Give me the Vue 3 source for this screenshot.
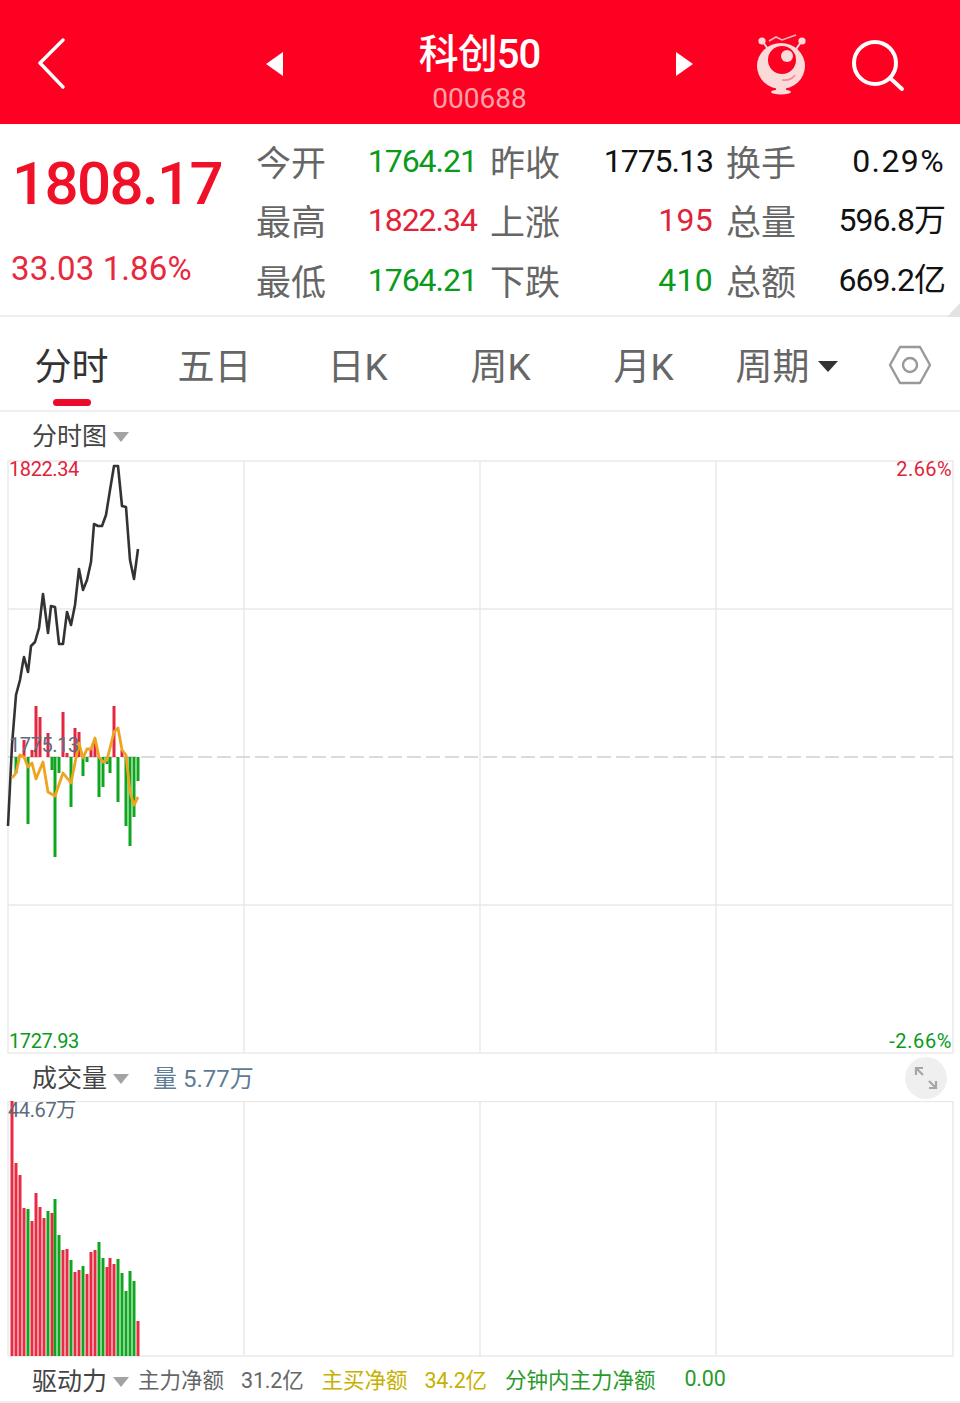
<script setup>
const tabs = ["分时", "五日", "日K", "周K", "月K"];

const stats = [
  ["今开", "1764.21", "down", "昨收", "1775.13", "", "换手", "0.29%", "pct"],
  ["最高", "1822.34", "up", "上涨", "195", "up int", "总量", "596.8万", ""],
  ["最低", "1764.21", "down", "下跌", "410", "down int", "总额", "669.2亿", ""],
];

const price = [
  [8, 826], [12, 745], [16, 695], [20, 680], [23, 662], [24, 657], [28, 672], [31, 646], [35, 642], [39, 628], [43, 594],
  [48, 633], [51, 606], [55, 607], [59, 644], [63, 644], [67, 612], [71, 625], [75, 605], [79, 569], [83, 590],
  [87, 580], [91, 562], [94, 524], [98, 526], [102, 526], [106, 515], [110, 490], [114, 466], [118, 466], [122, 506],
  [126, 507], [130, 560], [134, 579], [138, 549],
];

const avg = [
  [12, 778], [16, 773], [20, 755], [24, 757], [28, 767], [32, 763], [36, 779], [43, 762], [48, 792], [55, 796],
  [63, 773], [71, 783], [75, 763], [79, 743], [83, 758], [87, 749], [91, 749], [95, 738], [99, 757], [103, 762],
  [107, 760], [114, 732], [118, 728], [122, 750], [126, 755], [130, 792], [134, 805], [138, 797],
];

// x, end y of each tick bar measured from the zero line
const ticks = [
  [16, 773], [20, 755], [24, 740], [28, 824], [32, 750], [36, 706], [40, 717], [48, 733], [52, 770], [55, 857],
  [59, 773], [63, 712], [67, 753], [71, 807], [75, 728], [79, 732], [83, 776], [87, 762], [91, 748], [95, 743],
  [99, 797], [103, 787], [107, 764], [110, 773], [114, 706], [118, 802], [122, 750], [126, 826], [130, 846],
  [134, 817], [138, 781],
];

const volumes = [
  [12, 1101, "r"], [16, 1163, "r"], [20, 1175, "r"], [24, 1208, "r"], [28, 1209, "g"], [32, 1221, "r"], [36, 1193, "r"],
  [40, 1207, "r"], [44, 1218, "r"], [48, 1211, "g"], [52, 1213, "r"], [55, 1199, "g"], [59, 1235, "g"], [63, 1250, "r"],
  [67, 1249, "r"], [71, 1260, "g"], [75, 1272, "r"], [79, 1270, "r"], [83, 1266, "g"], [87, 1274, "r"], [91, 1252, "r"],
  [95, 1250, "r"], [99, 1242, "g"], [103, 1258, "g"], [107, 1267, "r"], [110, 1258, "r"], [114, 1264, "r"], [118, 1259, "g"],
  [122, 1273, "g"], [126, 1291, "g"], [130, 1271, "g"], [134, 1281, "g"], [138, 1321, "r"],
];

const gridX = [244, 480, 716];
const toPoints = (list) => list.map((p) => p.join(",")).join(" ");
</script>

<template>
  <div class="page">
    <header class="topbar">
      <svg class="back" width="30" height="52" viewBox="0 0 30 52">
        <path d="M26 2 3 25l23 24" fill="none" stroke="#fff" stroke-width="3.4" stroke-linecap="round" stroke-linejoin="round" />
      </svg>
      <span class="arrow arrow-left"></span>
      <div class="title-wrap">
        <div class="title">科创50</div>
        <div class="code">000688</div>
      </div>
      <span class="arrow arrow-right"></span>
      <svg class="mascot" width="52" height="62" viewBox="757 33 52 62">
        <path d="M764 42l7 10M802 42l-7 10" stroke="#fbdada" stroke-width="2" />
        <circle cx="763" cy="41" r="3.6" fill="#fbdada" />
        <circle cx="803" cy="41" r="3.6" fill="#fbdada" />
        <path d="M770 41l7-4 6 3 14-5" fill="none" stroke="#fbb5b9" stroke-width="1.6" />
        <ellipse cx="782" cy="66" rx="24" ry="23" fill="#fbdada" />
        <circle cx="783" cy="60" r="14" fill="#fe0022" />
        <circle cx="788" cy="56" r="6" fill="#fbdada" />
        <path d="M783 80q9 1 13-5" fill="none" stroke="#f58a92" stroke-width="1.6" />
        <path d="M777 88h10v3h-10z" fill="#fbdada" />
        <ellipse cx="782" cy="92" rx="10" ry="2.6" fill="#fbdada" />
      </svg>
      <svg class="search" width="54" height="54" viewBox="0 0 54 54">
        <circle cx="24" cy="24" r="21" fill="none" stroke="#fff" stroke-width="4" />
        <path d="M39 39l12 11" stroke="#fff" stroke-width="4" stroke-linecap="round" />
      </svg>
    </header>

    <section class="quote">
      <div class="quote-main">
        <div class="last">1808.17</div>
        <div class="change">33.03 1.86%</div>
      </div>
      <div class="stats">
        <template v-for="row in stats" :key="row[0]">
          <span class="stat-label">{{ row[0] }}</span>
          <span class="stat-value" :class="row[2]">{{ row[1] }}</span>
          <span class="stat-label">{{ row[3] }}</span>
          <span class="stat-value" :class="row[5]">{{ row[4] }}</span>
          <span class="stat-label">{{ row[6] }}</span>
          <span class="stat-value" :class="row[8]">{{ row[7] }}</span>
        </template>
      </div>
      <span class="corner"></span>
    </section>

    <nav class="tabs">
      <div v-for="(tab, i) in tabs" :key="tab" class="tab" :class="{ active: i === 0 }">{{ tab }}</div>
      <div class="tab">周期<span class="tab-caret"></span></div>
      <svg class="hex" width="44" height="40" viewBox="0 0 44 40">
        <path d="M12 2h20l10 18-10 18H12L2 20z" fill="none" stroke="#999" stroke-width="2.4" stroke-linejoin="round" />
        <circle cx="22" cy="20" r="7" fill="none" stroke="#999" stroke-width="2.4" />
      </svg>
    </nav>

    <div class="chart-head">分时图<span class="caret"></span></div>

    <div class="chart price-chart">
      <svg width="960" height="594" viewBox="0 460 960 594">
        <rect x="8" y="461" width="945" height="592" fill="none" stroke="#e8e8e8" stroke-width="1.4" />
        <line v-for="x in gridX" :key="x" :x1="x" :x2="x" y1="461" y2="1053" stroke="#e8e8e8" stroke-width="1.4" />
        <line x1="8" x2="953" y1="609" y2="609" stroke="#e8e8e8" stroke-width="1.4" />
        <line x1="8" x2="953" y1="905" y2="905" stroke="#e8e8e8" stroke-width="1.4" />
        <line x1="8" x2="953" y1="757" y2="757" stroke="#cfcfcf" stroke-width="1.4" stroke-dasharray="14 5" />
        <rect
          v-for="t in ticks"
          :key="t[0]"
          :x="t[0] - 1.5"
          :y="Math.min(t[1], 757)"
          width="3"
          :height="Math.abs(t[1] - 757)"
          :fill="t[1] < 757 ? '#e5263f' : '#0ea51f'"
        />
        <polyline :points="toPoints(price)" fill="none" stroke="#333" stroke-width="2.6" stroke-linejoin="round" />
        <polyline :points="toPoints(avg)" fill="none" stroke="#f0a31e" stroke-width="2.8" stroke-linejoin="round" />
      </svg>
      <span class="axis top-left up">1822.34</span>
      <span class="axis top-right up">2.66%</span>
      <span class="axis mid-left">1775.13</span>
      <span class="axis bottom-left down">1727.93</span>
      <span class="axis bottom-right down">-2.66%</span>
    </div>

    <div class="chart-head volume-head">
      成交量<span class="caret"></span>
      <span class="volume-now">量 5.77万</span>
      <button class="expand">
        <svg width="26" height="26" viewBox="0 0 26 26">
          <path d="M3 10V3h7M3 3l7 7M23 16v7h-7M23 23l-7-7" fill="none" stroke="#a6a6a6" stroke-width="2.2" />
        </svg>
      </button>
    </div>

    <div class="chart volume-chart">
      <svg width="960" height="256" viewBox="0 1101 960 256">
        <rect x="8" y="1101.5" width="945" height="254.5" fill="none" stroke="#e8e8e8" stroke-width="1.4" />
        <line v-for="x in gridX" :key="x" :x1="x" :x2="x" y1="1101" y2="1356" stroke="#e8e8e8" stroke-width="1.4" />
        <rect
          v-for="v in volumes"
          :key="v[0]"
          :x="v[0] - 1.5"
          :y="v[1]"
          width="3"
          :height="1356 - v[1]"
          :fill="v[2] === 'r' ? '#e82a42' : '#0ea51f'"
        />
      </svg>
      <span class="axis vol-max">44.67万</span>
    </div>

    <footer class="drive">
      <span class="drive-name">驱动力<span class="caret"></span></span>
      <span class="drive-item gray first">主力净额</span>
      <span class="drive-item gray num">31.2亿</span>
      <span class="drive-item yellow">主买净额</span>
      <span class="drive-item yellow num">34.2亿</span>
      <span class="drive-item green">分钟内主力净额</span>
      <span class="drive-item green num last-num">0.00</span>
    </footer>
  </div>
</template>

<style scoped>
.page {
  width: 960px;
  height: 1403px;
  overflow: hidden;
  background: #fff;
  font-family: Roboto, "Noto Sans CJK SC", sans-serif;
  color: #333;
}

.topbar {
  height: 124px;
  background: #fe0022;
  position: relative;
  display: flex;
  align-items: center;
  color: #fff;
}

.back {
  margin-left: 37px;
  margin-top: 4px;
}

.arrow {
  width: 0;
  height: 0;
  border-top: 12px solid transparent;
  border-bottom: 12px solid transparent;
  margin-top: 3px;
}

.arrow-left {
  margin-left: 199px;
  border-right: 17px solid #fff;
}

.arrow-right {
  border-left: 17px solid #fff;
}

.title-wrap {
  width: 393px;
  text-align: center;
  padding-top: 23px;
}

.title {
  font-size: 40px;
  line-height: 50px;
  font-weight: 500;
  letter-spacing: -1px;
}

.code {
  font-size: 28px;
  line-height: 36px;
  margin-top: 1px;
  color: #ffa3ab;
}

.mascot {
  margin-left: 63px;
  margin-top: 3px;
}

.search {
  margin-left: 43px;
  margin-top: 7px;
}

.quote {
  height: 193px;
  box-sizing: border-box;
  border-bottom: 2px solid #eeeeee;
  display: flex;
  position: relative;
}

.quote-main {
  width: 257px;
  flex: none;
}

.last {
  margin: 25px 0 0 12px;
  font-size: 60px;
  line-height: 70px;
  font-weight: 500;
  letter-spacing: -1.6px;
  color: #f01028;
}

.change {
  margin: 30px 0 0 11px;
  font-size: 33px;
  line-height: 40px;
  letter-spacing: 0.1px;
  color: #e8283c;
}

.stats {
  display: grid;
  grid-template-columns: 70px 136px 70px 138px 70px 134px;
  grid-auto-rows: 59.5px;
  column-gap: 14px;
  align-items: center;
  margin-top: 9px;
}

.stat-label {
  font-size: 35px;
  line-height: 48px;
  color: #666;
  margin: 4px 0 0 -1px;
}

.stat-value {
  font-size: 32px;
  line-height: 40px;
  letter-spacing: -1px;
  text-align: right;
  color: #111;
  margin-top: -4px;
}

.stat-value.int {
  letter-spacing: 0.3px;
}

.stat-value.pct {
  letter-spacing: 1.4px;
}

.up {
  color: #df2339;
}

.down {
  color: #0a9a1c;
}

.stat-value.up {
  color: #df2339;
}

.stat-value.down {
  color: #0a9a1c;
}

.corner {
  position: absolute;
  right: 0;
  bottom: -2px;
  width: 0;
  height: 0;
  border-left: 13px solid transparent;
  border-bottom: 14px solid #e2e2e2;
}

.tabs {
  height: 95px;
  box-sizing: border-box;
  border-bottom: 2px solid #f0f0f0;
  display: flex;
  align-items: center;
}

.tab {
  width: 143px;
  flex: none;
  text-align: center;
  font-size: 37px;
  line-height: 50px;
  color: #666;
  position: relative;
  margin-top: 8px;
}

.tab.active {
  color: #333;
}

.tab.active::after {
  content: "";
  position: absolute;
  left: 53px;
  bottom: -13px;
  width: 38px;
  height: 7px;
  border-radius: 4px;
  background: #ee0a2a;
}

.tab-caret {
  display: inline-block;
  margin-left: 8px;
  vertical-align: 8px;
  border-left: 10px solid transparent;
  border-right: 10px solid transparent;
  border-top: 11px solid #333;
}

.hex {
  margin-left: 30px;
  margin-top: 2px;
}

.chart-head {
  height: 48px;
  box-sizing: border-box;
  padding: 7px 0 0 32px;
  font-size: 25px;
  line-height: 36px;
  color: #444;
  position: relative;
}

.caret {
  display: inline-block;
  margin-left: 6px;
  vertical-align: 3px;
  border-left: 8px solid transparent;
  border-right: 8px solid transparent;
  border-top: 10px solid #a3a3a3;
}

.chart {
  position: relative;
}

.chart svg {
  display: block;
}

.price-chart {
  height: 594px;
}

.volume-chart {
  height: 255px;
}

.axis {
  position: absolute;
  font-size: 20px;
  line-height: 24px;
  letter-spacing: -0.4px;
}

.top-left {
  left: 9px;
  top: -3px;
}

.top-right {
  right: 8px;
  top: -3px;
  letter-spacing: 0.4px;
}

.mid-left {
  left: 9px;
  top: 273px;
  color: #5d6b80;
}

.bottom-left {
  left: 9px;
  top: 569px;
}

.bottom-right {
  right: 8px;
  top: 569px;
  letter-spacing: 0.6px;
}

.vol-max {
  left: 8px;
  top: -3px;
  color: #5d6b7d;
}

.volume-head {
  height: 47px;
  padding-top: 7px;
}

.volume-now {
  margin-left: 24px;
  font-size: 24px;
  color: #5f7c96;
}

.expand {
  position: absolute;
  right: 13px;
  top: 3px;
  width: 42px;
  height: 42px;
  padding: 0;
  border: none;
  border-radius: 50%;
  background: #efefef;
  display: flex;
  align-items: center;
  justify-content: center;
}

.drive {
  height: 47px;
  box-sizing: border-box;
  border-bottom: 2px solid #eeeeee;
  display: flex;
  align-items: center;
  padding-left: 32px;
}

.drive-name {
  width: 106px;
  flex: none;
  font-size: 25px;
  color: #444;
}

.drive-item {
  font-size: 21.5px;
  white-space: nowrap;
}

.drive-item.num {
  margin: 0 18px 0 17px;
  letter-spacing: -0.2px;
}

.gray {
  color: #666;
}

.yellow {
  color: #c6b100;
}

.green {
  color: #2a9a2c;
}

.last-num {
  margin-left: 29px !important;
}
</style>
